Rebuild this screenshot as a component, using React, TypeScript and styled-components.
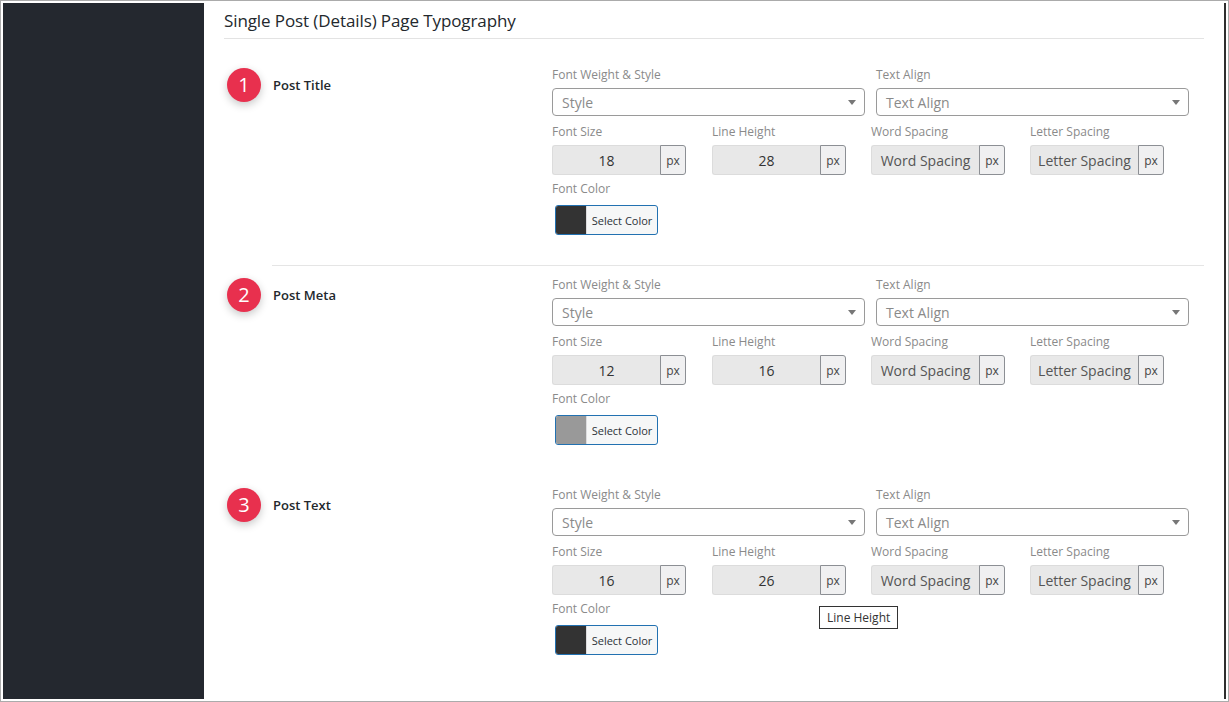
import React from "react";
import styled, { createGlobalStyle } from "styled-components";

const Global = createGlobalStyle`
  html, body { margin: 0; padding: 0; background: #fff; }
  body { font-family: "Open Sans", "Noto Sans", Arial, sans-serif; }
  * { box-sizing: border-box; }
`;

const Frame = styled.div`
  width: 1229px;
  height: 702px;
  border: 1px solid #ababab;
  padding: 2px;
  display: flex;
  background: #fff;
`;

const Sidebar = styled.aside`
  width: 201px;
  flex: none;
  background: #24282f;
`;

const Main = styled.main`
  flex: 1;
  border-right: 2px solid #2e2e2e;
  padding: 0 20px 0 20px;
  display: flex;
  flex-direction: column;
`;

const Heading = styled.h2`
  margin: 0;
  font-size: 17px;
  font-weight: 500;
  color: #23282d;
  line-height: 22px;
  padding: 7px 0 6px 0;
  border-bottom: 1px solid #e3e3e3;
  letter-spacing: -0.1px;
`;

const Sections = styled.div`
  margin-top: 16px;
  display: flex;
  flex-direction: column;
`;

const Section = styled.section<{ $divider?: boolean }>`
  height: 210px;
  display: flex;
  padding-top: 11px;
  border-top: 1px solid ${(p) => (p.$divider ? "#e5e5e5" : "transparent")};
  margin-left: ${(p) => (p.$divider ? "48px" : "0")};
  padding-left: ${(p) => (p.$divider ? "0" : "48px")};
`;

const SectionHead = styled.div`
  width: 328px;
  flex: none;
  margin-left: -48px;
  display: flex;
  align-items: center;
  align-self: flex-start;
  gap: 12px;
  padding-left: 3px;
  margin-top: 1px;
`;

const Badge = styled.span`
  width: 34px;
  height: 34px;
  border-radius: 50%;
  background: #e8304e;
  color: #fff;
  font-size: 20px;
  line-height: 34px;
  text-align: center;
  box-shadow: 0 3px 8px rgba(0, 0, 0, 0.22);
  flex: none;
`;

const SectionTitle = styled.span`
  font-size: 13px;
  font-weight: 600;
  color: #23282d;
`;

const Fields = styled.div`
  display: flex;
  flex-direction: column;
`;

const TopRow = styled.div`
  display: grid;
  grid-template-columns: 313px 313px;
  column-gap: 11px;
`;

const SpacingRow = styled.div`
  display: grid;
  grid-template-columns: 160px 159px 159px 159px;
  margin-top: 8px;
`;

const Field = styled.div`
  position: relative;
  display: flex;
  flex-direction: column;
`;

const Label = styled.label`
  font-size: 12px;
  line-height: 16px;
  color: #8a8a8a;
  margin-bottom: 5px;
  white-space: nowrap;
`;

const Select = styled.div`
  height: 28px;
  border: 1px solid #9a9a9a;
  border-radius: 4px;
  display: flex;
  align-items: center;
  justify-content: space-between;
  padding: 0 8px 0 9px;
  font-size: 14px;
  color: #8a8a8a;
  background: #fff;
`;

const Caret = styled.span`
  width: 0;
  height: 0;
  border-left: 4px solid transparent;
  border-right: 4px solid transparent;
  border-top: 5px solid #777;
`;

const InputGroup = styled.div`
  display: flex;
  width: 134px;
  height: 30px;
`;

const NumInput = styled.div<{ $placeholder?: boolean }>`
  flex: 1;
  background: #e8e8e8;
  border: 1px solid #dcdcdc;
  border-right: none;
  border-radius: 3px 0 0 3px;
  display: flex;
  align-items: center;
  justify-content: center;
  font-size: 14px;
  color: ${(p) => (p.$placeholder ? "#555" : "#333")};
  white-space: nowrap;
`;

const Addon = styled.span`
  width: 26px;
  flex: none;
  border: 1px solid #8c8f94;
  border-radius: 0 3px 3px 0;
  background: #f0f0f1;
  display: flex;
  align-items: center;
  justify-content: center;
  font-size: 12px;
  color: #444;
`;

const ColorField = styled.div`
  margin-top: 6px;
  display: flex;
  flex-direction: column;
  align-items: flex-start;
`;

const ColorButton = styled.button`
  margin: 3px 0 0 3px;
  height: 30px;
  width: 103px;
  padding: 0;
  border: 1px solid #2271b1;
  border-radius: 3px;
  background: #f6f7f7;
  display: flex;
  align-items: stretch;
  overflow: hidden;
  font-family: inherit;
  cursor: pointer;
`;

const Swatch = styled.span<{ $color: string }>`
  width: 30px;
  flex: none;
  background: ${(p) => p.$color};
`;

const ColorText = styled.span`
  flex: 1;
  display: flex;
  align-items: center;
  justify-content: center;
  font-size: 11px;
  color: #2c3338;
  border-left: 1px solid #dcdcde;
`;

const Tooltip = styled.span`
  position: absolute;
  left: 107px;
  top: 62px;
  border: 1px solid #333;
  background: #fff;
  color: #333;
  font-size: 12px;
  line-height: 15px;
  padding: 3px 7px;
  white-space: nowrap;
`;

type Item = {
  n: number;
  title: string;
  size: string;
  line: string;
  color: string;
  divider?: boolean;
  tooltip?: boolean;
};

const items: Item[] = [
  { n: 1, title: "Post Title", size: "18", line: "28", color: "#333333" },
  { n: 2, title: "Post Meta", size: "12", line: "16", color: "#999999", divider: true },
  { n: 3, title: "Post Text", size: "16", line: "26", color: "#333333", tooltip: true },
];

function SpacingField({
  label,
  value,
  placeholder,
  tooltip,
}: {
  label: string;
  value?: string;
  placeholder?: string;
  tooltip?: string;
}) {
  return (
    <Field>
      <Label>{label}</Label>
      <InputGroup>
        <NumInput $placeholder={!value}>{value ?? placeholder}</NumInput>
        <Addon>px</Addon>
      </InputGroup>
      {tooltip && <Tooltip>{tooltip}</Tooltip>}
    </Field>
  );
}

export default function App() {
  return (
    <>
      <Global />
      <Frame>
        <Sidebar />
        <Main>
          <Heading>Single Post (Details) Page Typography</Heading>
          <Sections>
            {items.map((it) => (
              <Section key={it.n} $divider={it.divider}>
                <SectionHead>
                  <Badge>{it.n}</Badge>
                  <SectionTitle>{it.title}</SectionTitle>
                </SectionHead>
                <Fields>
                  <TopRow>
                    <Field>
                      <Label>Font Weight &amp; Style</Label>
                      <Select>
                        Style
                        <Caret />
                      </Select>
                    </Field>
                    <Field>
                      <Label>Text Align</Label>
                      <Select>
                        Text Align
                        <Caret />
                      </Select>
                    </Field>
                  </TopRow>
                  <SpacingRow>
                    <SpacingField label="Font Size" value={it.size} />
                    <SpacingField
                      label="Line Height"
                      value={it.line}
                      tooltip={it.tooltip ? "Line Height" : undefined}
                    />
                    <SpacingField label="Word Spacing" placeholder="Word Spacing" />
                    <SpacingField label="Letter Spacing" placeholder="Letter Spacing" />
                  </SpacingRow>
                  <ColorField>
                    <Label>Font Color</Label>
                    <ColorButton>
                      <Swatch $color={it.color} />
                      <ColorText>Select Color</ColorText>
                    </ColorButton>
                  </ColorField>
                </Fields>
              </Section>
            ))}
          </Sections>
        </Main>
      </Frame>
    </>
  );
}
